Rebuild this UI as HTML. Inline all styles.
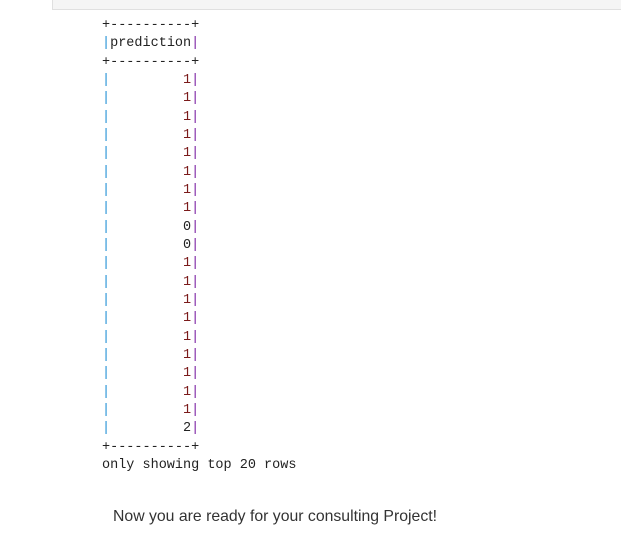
<html><head><style>
body{margin:0;background:#fff;width:621px;height:543px;overflow:hidden;position:relative}
.top{position:absolute;left:52px;top:-1px;width:580px;height:9px;background:#f5f5f5;border:1px solid #e0e0e0}
pre{position:absolute;left:102px;top:17px;margin:0;font-family:"Liberation Mono",monospace;font-size:13.5px;line-height:18.33px;color:#222}
.b{color:#1f8fd6}.p{color:#7a1fa2}.n{color:#7a1a1a}
.t{position:absolute;left:113px;top:508px;font-family:"Liberation Sans",sans-serif;font-size:15.8px;color:#333}
</style></head><body>
<div class="top"></div>
<pre>+----------+
<span class="b">|</span>prediction<span class="p">|</span>
+----------+
<span class="b">|</span>         <span class="n">1</span><span class="p">|</span>
<span class="b">|</span>         <span class="n">1</span><span class="p">|</span>
<span class="b">|</span>         <span class="n">1</span><span class="p">|</span>
<span class="b">|</span>         <span class="n">1</span><span class="p">|</span>
<span class="b">|</span>         <span class="n">1</span><span class="p">|</span>
<span class="b">|</span>         <span class="n">1</span><span class="p">|</span>
<span class="b">|</span>         <span class="n">1</span><span class="p">|</span>
<span class="b">|</span>         <span class="n">1</span><span class="p">|</span>
<span class="b">|</span>         0<span class="p">|</span>
<span class="b">|</span>         0<span class="p">|</span>
<span class="b">|</span>         <span class="n">1</span><span class="p">|</span>
<span class="b">|</span>         <span class="n">1</span><span class="p">|</span>
<span class="b">|</span>         <span class="n">1</span><span class="p">|</span>
<span class="b">|</span>         <span class="n">1</span><span class="p">|</span>
<span class="b">|</span>         <span class="n">1</span><span class="p">|</span>
<span class="b">|</span>         <span class="n">1</span><span class="p">|</span>
<span class="b">|</span>         <span class="n">1</span><span class="p">|</span>
<span class="b">|</span>         <span class="n">1</span><span class="p">|</span>
<span class="b">|</span>         <span class="n">1</span><span class="p">|</span>
<span class="b">|</span>         2<span class="p">|</span>
+----------+
only showing top 20 rows</pre>
<div class="t">Now you are ready for your consulting Project!</div>
</body></html>
